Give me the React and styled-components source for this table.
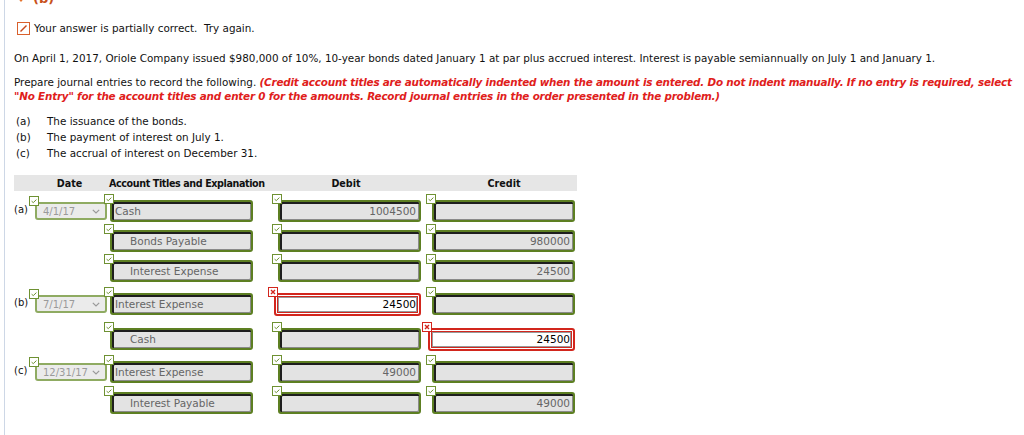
import React from 'react'
import styled, { createGlobalStyle } from 'styled-components'

const GlobalStyle = createGlobalStyle`
    html, body {
        margin: 0;
        padding: 0;
        background: #fff;
    }
    body {
        font-family: 'DejaVu Sans', Verdana, sans-serif;
        font-size: 10.4px;
        color: #111;
    }
`

const entries = [
    { label: '(a)', date: '4/1/17', account: 'Cash', debit: '1004500', credit: '', space: 9 },
    { account: 'Bonds Payable', indent: true, debit: '', credit: '980000', space: 8 },
    { account: 'Interest Expense', indent: true, debit: '', credit: '24500', space: 8 },
    { label: '(b)', date: '7/1/17', account: 'Interest Expense', debit: '24500', credit: '', debitWrong: true, space: 11 },
    { account: 'Cash', indent: true, debit: '', credit: '24500', creditWrong: true, space: 13 },
    { label: '(c)', date: '12/31/17', account: 'Interest Expense', debit: '49000', credit: '', space: 11 },
    { account: 'Interest Payable', indent: true, debit: '', credit: '49000', space: 9 }
]

const CheckMark = ({ wrong }) => (
    <Mark>
        <svg width='10' height='10' viewBox='0 0 10 10'>
            <rect
                x='0.5'
                y='0.5'
                width='9'
                height='9'
                fill='#fff'
                stroke={wrong ? '#d2261d' : '#6e9132'}
            />
            {wrong ? (
                <path
                    d='M3 3 L7 7 M7 3 L3 7'
                    stroke='#d2261d'
                    strokeWidth='1.4'
                />
            ) : (
                <path
                    d='M2.6 5.2 L4.3 6.6 L7.4 3.6'
                    fill='none'
                    stroke='#6e9132'
                    strokeWidth='1'
                />
            )}
        </svg>
    </Mark>
)

const Field = ({ value, wrong, indent, align }) => (
    <FieldWrap $wrong={wrong}>
        <CheckMark wrong={wrong} />
        <Box $wrong={wrong} $indent={indent} $align={align}>
            {value}
        </Box>
    </FieldWrap>
)

const App = () => {
    return (
        <>
            <GlobalStyle />
            <Page>
                <Heading>
                    <Triangle />
                    <span>(b)</span>
                </Heading>
                <Feedback>
                    <svg width='13' height='13' viewBox='0 0 13 13'>
                        <rect
                            x='0.5'
                            y='0.5'
                            width='12'
                            height='12'
                            fill='#fff'
                            stroke='#d9602c'
                        />
                        <path
                            d='M3.5 9.5 L9.5 3.5'
                            stroke='#c7481a'
                            strokeWidth='1.5'
                        />
                    </svg>
                    <span>Your answer is partially correct.&nbsp; Try again.</span>
                </Feedback>
                <Text>
                    On April 1, 2017, Oriole Company issued $980,000 of 10%,
                    10-year bonds dated January 1 at par plus accrued interest.
                    Interest is payable semiannually on July 1 and January 1.
                </Text>
                <Instructions>
                    Prepare journal entries to record the following.{' '}
                    <em>
                        (Credit account titles are automatically indented when
                        the amount is entered. Do not indent manually. If no
                        entry is required, select "No Entry" for the account
                        titles and enter 0 for the amounts. Record journal
                        entries in the order presented in the problem.)
                    </em>
                </Instructions>
                <Parts>
                    <li>
                        <b>(a)</b>The issuance of the bonds.
                    </li>
                    <li>
                        <b>(b)</b>The payment of interest on July 1.
                    </li>
                    <li>
                        <b>(c)</b>The accrual of interest on December 31.
                    </li>
                </Parts>
                <Journal>
                    <HeaderRow>
                        <DateHead>Date</DateHead>
                        <AccountHead>Account Titles and Explanation</AccountHead>
                        <AmountHead $w={138}>Debit</AmountHead>
                        <AmountHead $w={178}>Credit</AmountHead>
                    </HeaderRow>
                    {entries.map((e, i) => (
                        <Row key={i} $space={e.space}>
                            <DateCell>
                                {e.label && (
                                    <>
                                        <Label>{e.label}</Label>
                                        <SelectWrap>
                                            <CheckMark />
                                            <Select>
                                                <span>{e.date}</span>
                                                <svg
                                                    width='8'
                                                    height='5'
                                                    viewBox='0 0 8 5'
                                                >
                                                    <path
                                                        d='M0.8 0.8 L4 4 L7.2 0.8'
                                                        fill='none'
                                                        stroke='#999'
                                                        strokeWidth='1.2'
                                                    />
                                                </svg>
                                            </Select>
                                        </SelectWrap>
                                    </>
                                )}
                            </DateCell>
                            <AccountCell>
                                <Field value={e.account} indent={e.indent} />
                            </AccountCell>
                            <AmountCell $w={154}>
                                <Field
                                    value={e.debit}
                                    wrong={e.debitWrong}
                                    align='right'
                                />
                            </AmountCell>
                            <AmountCell $w={143}>
                                <Field
                                    value={e.credit}
                                    wrong={e.creditWrong}
                                    align='right'
                                />
                            </AmountCell>
                        </Row>
                    ))}
                </Journal>
            </Page>
        </>
    )
}

const Page = styled.div`
    margin-left: 4px;
    border-left: 1px solid #cdd7e6;
    padding: 0 4px 0 9px;
    min-height: 435px;
    box-sizing: border-box;
    overflow: hidden;
`

const Heading = styled.div`
    display: flex;
    align-items: center;
    gap: 6px;
    height: 14px;
    margin-top: -9px;
    margin-left: 1px;
    color: #c8511c;
    font-weight: bold;
    font-size: 13px;
`

const Triangle = styled.div`
    width: 0;
    height: 0;
    border-left: 6px solid transparent;
    border-right: 6px solid transparent;
    border-top: 7px solid #e5742f;
`

const Feedback = styled.div`
    display: flex;
    align-items: center;
    gap: 4px;
    margin-top: 16px;
    margin-left: 3px;
    height: 14px;

    svg {
        flex: none;
    }
`

const Text = styled.p`
    margin: 16px 0 0;
    line-height: 14px;
`

const Instructions = styled.p`
    margin: 10px 0 0;
    line-height: 14px;

    em {
        color: #e0201b;
        font-weight: bold;
        letter-spacing: -0.2px;
    }
`

const Parts = styled.ul`
    list-style: none;
    margin: 10px 0 0;
    padding: 0 0 0 2px;
    line-height: 16px;

    b {
        display: inline-block;
        width: 31px;
        font-weight: normal;
    }
`

const Journal = styled.div`
    margin-top: 14px;
    width: 563px;
`

const HeaderRow = styled.div`
    display: flex;
    align-items: center;
    height: 16px;
    background: #e6e6e6;
    font-weight: bold;
    font-size: 9.6px;
    white-space: nowrap;
`

const DateHead = styled.div`
    flex: none;
    width: 95px;
    padding-left: 16px;
    box-sizing: border-box;
    text-align: center;
`

const AccountHead = styled.div`
    flex: none;
    width: 168px;
    letter-spacing: -0.4px;
`

const AmountHead = styled.div`
    flex: none;
    width: ${(p) => p.$w}px;
    text-align: center;
`

const Row = styled.div`
    display: flex;
    align-items: center;
    margin-top: ${(p) => p.$space}px;
    height: 22px;
`

const DateCell = styled.div`
    display: flex;
    align-items: center;
    flex: none;
    width: 96px;
    height: 22px;
`

const Label = styled.span`
    width: 21px;
    margin-top: -4px;
    font-size: 10px;
`

const SelectWrap = styled.div`
    position: relative;
`

const Select = styled.div`
    display: flex;
    align-items: center;
    justify-content: space-between;
    width: 72px;
    height: 18px;
    box-sizing: border-box;
    padding: 0 5px 0 6px;
    border: 2px solid #8fab62;
    border-radius: 3px;
    background: #ebebeb;
    color: #9a9a9a;
    font-size: 10px;
`

const AccountCell = styled.div`
    flex: none;
    width: 168px;
`

const AmountCell = styled.div`
    flex: none;
    width: ${(p) => p.$w}px;
`

const FieldWrap = styled.div`
    position: relative;
    width: ${(p) => (p.$wrong ? '147px' : '143px')};
    margin-left: ${(p) => (p.$wrong ? '-4px' : '0')};
`

const Mark = styled.div`
    position: absolute;
    left: -6px;
    top: -6px;
    width: 10px;
    height: 10px;
    z-index: 1;

    svg {
        display: block;
    }
`

const Box = styled.div`
    height: ${(p) => (p.$wrong ? '23px' : '22px')};
    box-sizing: border-box;
    padding: 0 3px 0 ${(p) => (p.$indent ? '18px' : '3px')};
    display: flex;
    align-items: center;
    justify-content: ${(p) =>
        p.$align === 'right' ? 'flex-end' : 'flex-start'};
    border-radius: 3px;
    font-size: 10.5px;
    ${(p) =>
        p.$wrong
            ? `
        border: 2px solid #d2261d;
        background: #fff;
        color: #000;
        box-shadow: inset 0 0 0 1px #fff, inset 0 0 0 2px #d2261d, inset 0 0 0 3px #999;
    `
            : `
        border: 2px solid #5d7f22;
        background: #e3e3e3;
        color: #666;
        box-shadow: inset 2px 2px 0 #1e1e1e, inset -1px -1px 0 #8a8a8a;
    `}
`

export default App
